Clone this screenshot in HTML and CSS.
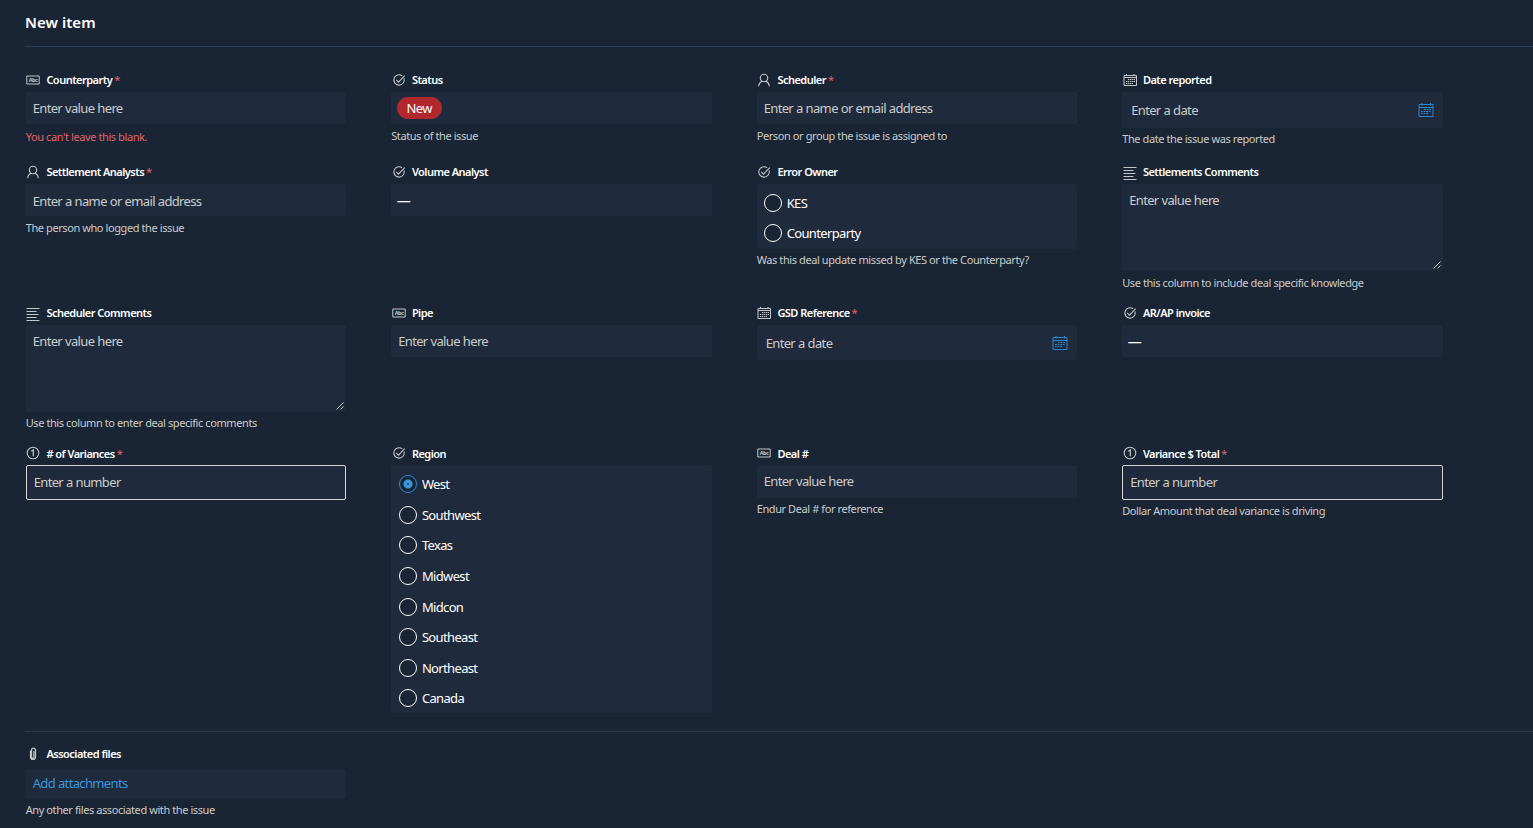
FILE: index.html
```
<!DOCTYPE html>
<html lang="en">
<head>
<meta charset="utf-8">
<title>New item</title>
<link rel="stylesheet" href="styles.css">
</head>
<body>
<svg class="sprite" aria-hidden="true">
  <symbol id="i-abc" viewBox="0 0 14 14"><path d="M.8 3h12.400v8H.8z" fill="none" stroke="currentColor"/><text x="7" y="9" font-size="5.500" font-weight="700" text-anchor="middle" fill="currentColor">Abc</text></symbol>
  <symbol id="i-check" viewBox="0 0 14 14"><path d="M12 5.400A5.200 5.200 0 1 1 10.200 2.800M4.200 6.900l2.300 2.300 6.200-6.500" fill="none" stroke="currentColor" stroke-width="1.050"/></symbol>
  <symbol id="i-person" viewBox="0 0 14 14"><circle cx="7" cy="5" r="3.700" fill="none" stroke="currentColor" stroke-width="1.100"/><path d="M1.700 13.200C1.900 10.600 3.200 8.900 5.100 8.200M12.300 13.200C12.100 10.600 10.800 8.900 8.900 8.200" fill="none" stroke="currentColor" stroke-width="1.100"/></symbol>
  <symbol id="i-cal-sm" viewBox="0 0 14 14"><path d="M1 2.500h12.500v10H1zM1 4.500h12.500M3.500 1v2M11 1v2" fill="none" stroke="currentColor"/><path d="M5 6.500h7M3 8.500h9M3 10.500h7" fill="none" stroke="currentColor" stroke-dasharray="1.400 .6"/></symbol>
  <symbol id="i-cal" viewBox="0 0 16 14"><path d="M1 1.500h14v12H1zM1 4.500h14M4 0v2.500M12.500 0v2.500" fill="none" stroke="currentColor"/><path d="M6 6.500h7.500M3 8.500h10.500M3 10.500h8" fill="none" stroke="currentColor" stroke-dasharray="1.800 .8"/></symbol>
  <symbol id="i-lines" viewBox="0 0 14 14"><path d="M.5 .5h13M.5 3.500h10M.5 6.500h12M.5 9.500h10M.5 12.500h13" fill="none" stroke="currentColor"/></symbol>
  <symbol id="i-num" viewBox="0 0 14 14"><circle cx="7" cy="7" r="5.800" fill="none" stroke="currentColor" stroke-width="1.050"/><path d="M5.300 5.300 7.300 3.900V10.200" fill="none" stroke="currentColor" stroke-width="1.200"/></symbol>
  <symbol id="i-clip" viewBox="0 0 14 14"><path d="M4.500 3.500v6.500a2.500 2.500 0 0 0 5 0V3M9.500 3.500a2 2 0 0 0-4-.5v7a1.200 1.200 0 0 0 2.400 0V4" fill="none" stroke="currentColor" stroke-width="1.250"/></symbol>
  <symbol id="i-grip" viewBox="0 0 8 8"><path d="M.5 7.500l7-7M4.500 7.500l3-3" fill="none" stroke="currentColor"/></symbol>
</svg>
<main class="page">
  <h1 class="title">New item</h1>
  <form class="grid">
    <section class="item">
      <div class="label"><svg class="icon"><use href="#i-abc"/></svg><span>Counterparty</span><b class="req">*</b></div>
      <div class="field">Enter value here</div>
      <p class="help error">You can't leave this blank.</p>
    </section>
    <section class="item">
      <div class="label"><svg class="icon"><use href="#i-check"/></svg><span>Status</span></div>
      <div class="field choice"><span class="pill">New</span></div>
      <p class="help">Status of the issue</p>
    </section>
    <section class="item">
      <div class="label"><svg class="icon"><use href="#i-person"/></svg><span>Scheduler</span><b class="req">*</b></div>
      <div class="field people">Enter a name or email address</div>
      <p class="help">Person or group the issue is assigned to</p>
    </section>
    <section class="item">
      <div class="label"><svg class="icon"><use href="#i-cal-sm"/></svg><span>Date reported</span></div>
      <div class="field date">Enter a date<svg class="picker"><use href="#i-cal"/></svg></div>
      <p class="help tight">The date the issue was reported</p>
    </section>

    <section class="item">
      <div class="label"><svg class="icon"><use href="#i-person"/></svg><span>Settlement Analysts</span><b class="req">*</b></div>
      <div class="field people lower">Enter a name or email address</div>
      <p class="help">The person who logged the issue</p>
    </section>
    <section class="item">
      <div class="label"><svg class="icon"><use href="#i-check"/></svg><span>Volume Analyst</span></div>
      <div class="field choice"><span class="dash">—</span></div>
    </section>
    <section class="item">
      <div class="label"><svg class="icon"><use href="#i-check"/></svg><span>Error Owner</span></div>
      <div class="field radios short">
        <div class="option"><i class="radio"></i>KES</div>
        <div class="option"><i class="radio"></i>Counterparty</div>
      </div>
      <p class="help tight">Was this deal update missed by KES or the Counterparty?</p>
    </section>
    <section class="item">
      <div class="label"><svg class="icon low"><use href="#i-lines"/></svg><span>Settlements Comments</span></div>
      <div class="field area">Enter value here<svg class="grip"><use href="#i-grip"/></svg></div>
      <p class="help">Use this column to include deal specific knowledge</p>
    </section>

    <section class="item">
      <div class="label"><svg class="icon low"><use href="#i-lines"/></svg><span>Scheduler Comments</span></div>
      <div class="field area">Enter value here<svg class="grip"><use href="#i-grip"/></svg></div>
      <p class="help tight">Use this column to enter deal specific comments</p>
    </section>
    <section class="item">
      <div class="label"><svg class="icon"><use href="#i-abc"/></svg><span>Pipe</span></div>
      <div class="field">Enter value here</div>
    </section>
    <section class="item">
      <div class="label"><svg class="icon"><use href="#i-cal-sm"/></svg><span>GSD Reference</span><b class="req">*</b></div>
      <div class="field date compact">Enter a date<svg class="picker"><use href="#i-cal"/></svg></div>
    </section>
    <section class="item">
      <div class="label"><svg class="icon"><use href="#i-check"/></svg><span>AR/AP invoice</span></div>
      <div class="field choice"><span class="dash">—</span></div>
    </section>

    <section class="item">
      <div class="label"><svg class="icon"><use href="#i-num"/></svg><span># of Variances</span><b class="req">*</b></div>
      <div class="field number">Enter a number</div>
    </section>
    <section class="item">
      <div class="label"><svg class="icon"><use href="#i-check"/></svg><span>Region</span></div>
      <div class="field radios regions">
        <div class="option"><i class="radio on"></i>West</div>
        <div class="option"><i class="radio"></i>Southwest</div>
        <div class="option"><i class="radio"></i>Texas</div>
        <div class="option"><i class="radio"></i>Midwest</div>
        <div class="option"><i class="radio"></i>Midcon</div>
        <div class="option"><i class="radio"></i>Southeast</div>
        <div class="option"><i class="radio"></i>Northeast</div>
        <div class="option"><i class="radio"></i>Canada</div>
      </div>
    </section>
    <section class="item">
      <div class="label"><svg class="icon"><use href="#i-abc"/></svg><span>Deal #</span></div>
      <div class="field deal">Enter value here</div>
      <p class="help tight">Endur Deal # for reference</p>
    </section>
    <section class="item">
      <div class="label"><svg class="icon"><use href="#i-num"/></svg><span>Variance $ Total</span><b class="req">*</b></div>
      <div class="field number">Enter a number</div>
      <p class="help tight">Dollar Amount that deal variance is driving</p>
    </section>
  </form>
  <section class="files">
    <div class="item">
      <div class="label"><svg class="icon"><use href="#i-clip"/></svg><span>Associated files</span></div>
      <div class="field attach">Add attachments</div>
      <p class="help tight">Any other files associated with the issue</p>
    </div>
  </section>
</main>
</body>
</html>
```
FILE: styles.css
```
* { box-sizing: border-box; }
body {
  margin: 0;
  height: 828px;
  overflow: hidden;
  background: #192534;
  color: #fff;
  font-family: "Noto Sans", "Open Sans", sans-serif;
  font-size: 13px;
}
.sprite { display: none; }
.page { padding-left: 25px; }
.title {
  margin: 0;
  height: 47px;
  padding-top: 12px;
  border-bottom: 1px solid #2b3d52;
  font-size: 15px;
  line-height: 21px;
  font-weight: 600;
  letter-spacing: 0.05px;
}
.grid {
  display: grid;
  grid-template-columns: repeat(4, 320.5px);
  grid-template-rows: 92px 141px 140px 286px;
  column-gap: 45px;
  padding: 25px 0 0 0.7px;
}
.label {
  display: flex;
  align-items: center;
  height: 20px;
  padding: 0 0 4px 0.7px;
  font-size: 11px;
  line-height: 16px;
  font-weight: 600;
  letter-spacing: -0.52px;
  white-space: nowrap;
}
.grid .item:nth-child(n + 13) .label { padding-bottom: 2px; }
.grid .item:nth-child(n + 13) .icon { margin-top: -2px; }
.icon {
  width: 14px;
  height: 14px;
  margin-right: 6px;
  flex: none;
  color: #c3c6ca;
}
.icon.low { position: relative; top: 2px; }
.req { margin-left: 2px; color: #e0626f; font-weight: 400; }
.field {
  display: flex;
  align-items: center;
  height: 32px;
  padding: 0 7px;
  border-radius: 2px;
  background: #1f2b3c;
  color: #cbcbcb;
  line-height: 20px;
  letter-spacing: -0.65px;
  word-spacing: 0.2px;
  white-space: nowrap;
}
.choice { padding-left: 5.5px; color: #fff; }
.pill {
  width: 45px;
  height: 22px;
  border-radius: 11px;
  background: #b0282d;
  line-height: 22px;
  text-align: center;
}
.people { border: 1px solid #212c3c; padding: 0 6px 1px; }
.people.lower { padding: 1px 6px 0; }
.dash { padding-top: 2px; font-size: 14px; line-height: 20px; }
.date { height: 35.5px; padding: 1px 9px; justify-content: space-between; }
.date.compact { height: 35px; }
.picker { width: 16px; height: 14px; color: #2e86cf; }
.area {
  position: relative;
  height: 87px;
  align-items: flex-start;
  padding-top: 6px;
}
.grip {
  position: absolute;
  right: 2px;
  bottom: 2px;
  width: 8px;
  height: 8px;
  color: #c8c8c8;
}
.number { height: 35px; padding-bottom: 1px; border: 1px solid #d6d6d6; }
.deal { height: 33px; padding-bottom: 1px; }
.radios {
  flex-direction: column;
  align-items: flex-start;
  height: 248px;
  padding: 4px 7px 0;
  color: #fff;
}
.radios.regions { padding-left: 7.7px; }
.radios.short { height: 65px; }
.option { display: flex; align-items: center; height: 30.58px; flex: none; }
.short .option { height: 30px; }
.radio {
  width: 18px;
  height: 18px;
  margin-right: 5px;
  border: 1px solid #fff;
  border-radius: 50%;
  background: #192534;
}
.radio.on {
  border-color: #2f8ad3;
  background: radial-gradient(circle, #192534 0.5px, #3a96dd 1px, #3a96dd 4px, #192534 5px);
}
.help {
  margin: 4px 0 0;
  color: #cbcbcb;
  font-size: 11px;
  line-height: 16px;
  letter-spacing: -0.41px;
  white-space: nowrap;
}
.help.tight { margin-top: 3px; }
.help.error { margin-top: 5px; color: #e0626f; }
.files { padding: 14px 0 0 0.7px; border-top: 1px solid #2b3a4c; }
.files .item { width: 320.5px; }
.files .label { height: 23px; padding-bottom: 7px; }
.attach { height: 30px; padding-bottom: 2px; color: #3a96dd; }
```
